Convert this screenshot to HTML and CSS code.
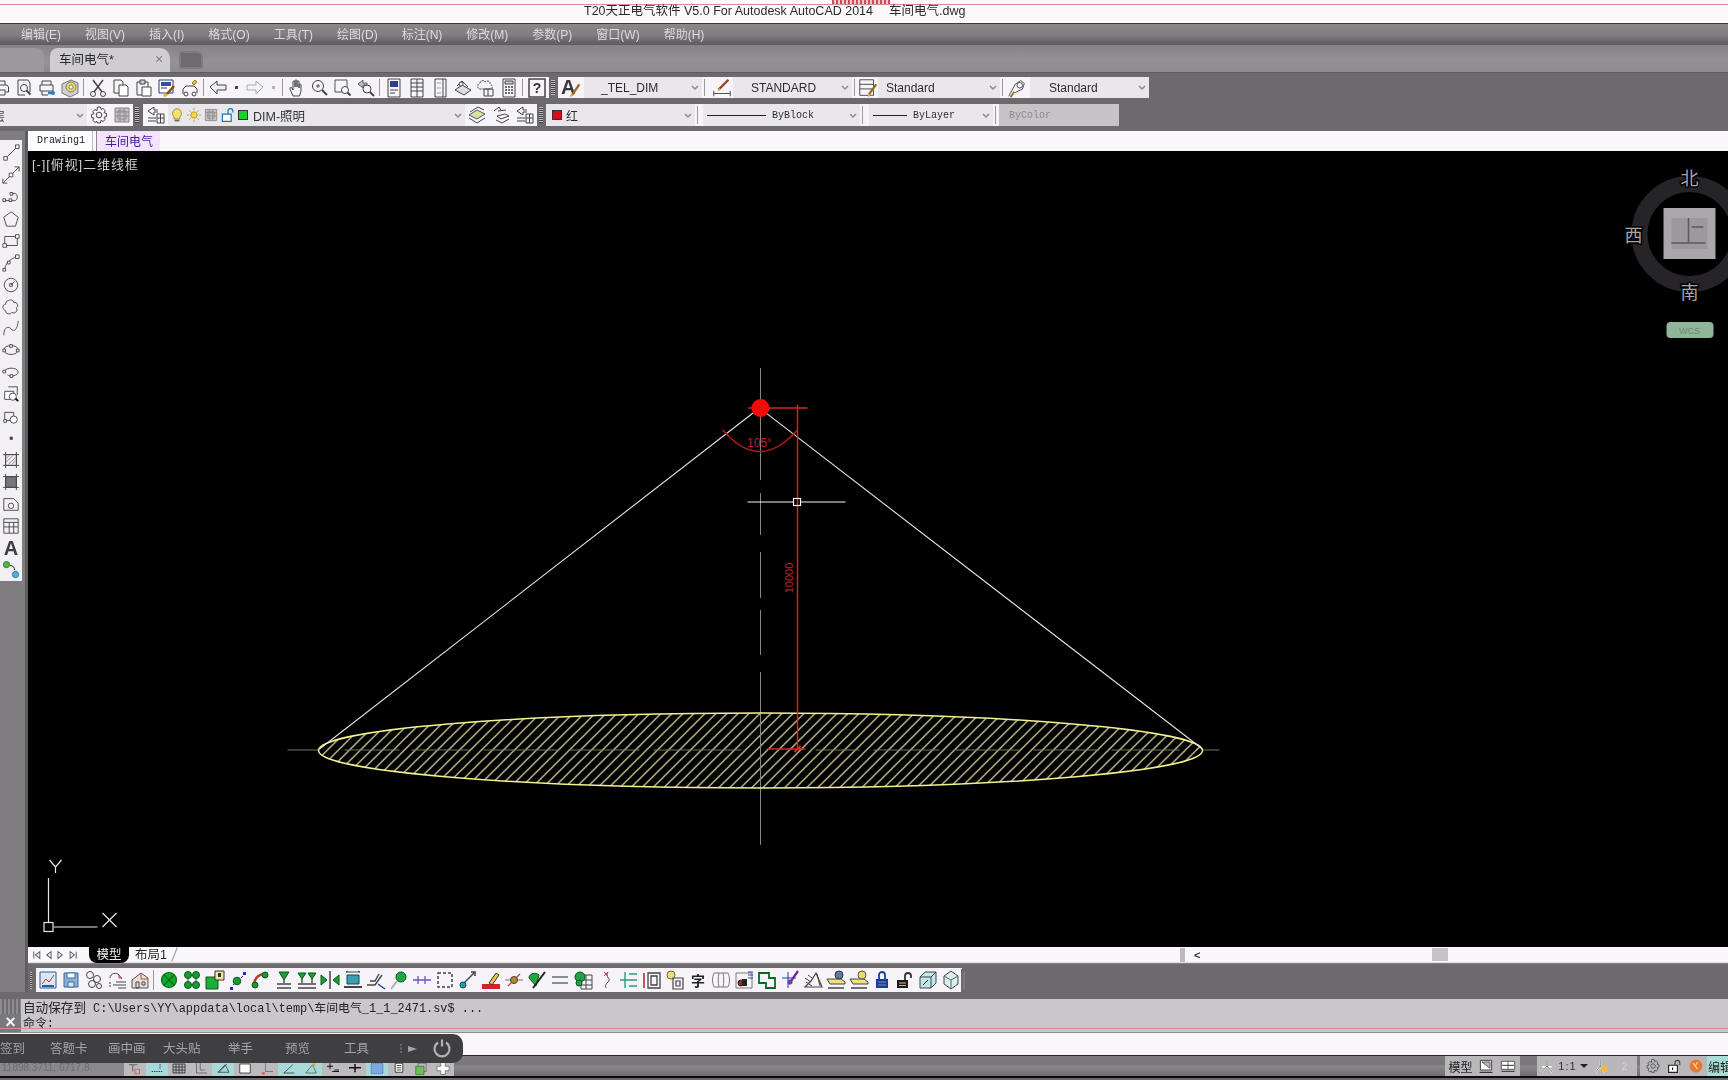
FILE: index.html
```html
<!DOCTYPE html>
<html lang="zh-CN">
<head>
<meta charset="utf-8">
<title>T20天正电气软件 V5.0 For Autodesk AutoCAD 2014</title>
<link rel="stylesheet" href="styles.css">
</head>
<body>
<svg class="defs" aria-hidden="true">
<defs>
<symbol id="printer" viewBox="0 0 20 20"><path d="M6 7V3h8v4M4 7h12l1.500 2v5h-3M5.500 14h-3V9z"/><path d="M6 12h8v5H6z"/></symbol>
<symbol id="preview" viewBox="0 0 20 20"><path d="M4 2h10l2 3v9M4 2v15h7"/><circle cx="10" cy="10" r="3.500"/><path d="M12.500 12.500l4 4" stroke-width="1.800"/></symbol>
<symbol id="plot" viewBox="0 0 20 20"><path d="M5 7V3h9v4M3 7h13v6H3zM5 13v4h6"/><path d="M11 15l6 0" stroke="#2a7fc0" stroke-width="2.500"/><circle cx="16" cy="15" r="2" fill="#2a7fc0" stroke="none"/></symbol>
<symbol id="pub3d" viewBox="0 0 20 20"><path d="M2 6l9-4 7 3v10l-8 4-8-4z" fill="#cfd0d6" stroke="#777"/><circle cx="11" cy="9" r="5" fill="#e4d26a" stroke="#8a8a50"/><circle cx="11" cy="9" r="2" fill="#fff" stroke="#888"/></symbol>
<symbol id="cut" viewBox="0 0 20 20"><path d="M5 2l9 12M15 2L6 14" stroke-width="1.500"/><circle cx="5" cy="16" r="2.500"/><circle cx="15" cy="16" r="2.500"/></symbol>
<symbol id="copy" viewBox="0 0 20 20"><path d="M3 2h7l2 2v3M3 2v13h5"/><path d="M8 7h7l2 2v9H8z" fill="#fff"/></symbol>
<symbol id="paste" viewBox="0 0 20 20"><path d="M3 4h11v5M3 4v13h5" /><path d="M6 2h5v4H6z" fill="#ccc"/><path d="M8 9h9v9H8z" fill="#fff"/></symbol>
<symbol id="match" viewBox="0 0 20 20"><path d="M2 2h14v13H2z" stroke="#2a3a7c" fill="#fff"/><path d="M4 4h10v4H4z" fill="#3a4f9c" stroke="none"/><path d="M4 10h6" stroke="#2a3a7c"/><path d="M17 8l-7 8" stroke="#8a4b10" stroke-width="2.500"/><path d="M8 15l3 2-3 2-2-1z" fill="#e5b020" stroke="none"/></symbol>
<symbol id="block" viewBox="0 0 20 20"><path d="M3 16v-5l3-3h8l3 3v4"/><circle cx="6" cy="16" r="2"/><circle cx="14" cy="16" r="2"/><path d="M12 5l3-3 2 2-3 3z" fill="#ecc030" stroke="#a88010"/></symbol>
<symbol id="undo" viewBox="0 0 20 20"><path d="M2 9l7-6v4h9v5H9v4z" fill="#eee"/></symbol>
<symbol id="redo" viewBox="0 0 20 20"><path d="M18 9l-7-6v4H2v5h9v4z" fill="#f4f4f4" stroke="#aaa"/></symbol>
<symbol id="pan" viewBox="0 0 20 20"><path d="M6 18l-3-7c-.5-2 1-2 2-1l1 2V4c0-1.500 2-1.500 2 0v5-6c0-1.500 2-1.500 2 0v6-5c0-1.500 2-1.500 2 0v6-3c0-1.500 2-1.500 2 0v6l-1.500 5z"/></symbol>
<symbol id="zoom1" viewBox="0 0 20 20"><circle cx="8" cy="8" r="5.500"/><path d="M12 12l5 5" stroke-width="2"/><path d="M6 8h4M8 6v4" stroke-width=".9"/></symbol>
<symbol id="zoom2" viewBox="0 0 20 20"><path d="M2 2h12v12H2z" stroke="#555"/><circle cx="12" cy="12" r="3.500" fill="#fff"/><path d="M14.500 14.500l3 3" stroke-width="2"/></symbol>
<symbol id="zoom3" viewBox="0 0 20 20"><path d="M2 6l5-4v3h4v2H7v3z" fill="#bbb" stroke="#666"/><circle cx="11" cy="11" r="4"/><path d="M14 14l4 4" stroke-width="2"/></symbol>
<symbol id="props" viewBox="0 0 20 20"><path d="M4 1h12v18H4z"/><path d="M6 3h8v6H6z" fill="#2c3f8c" stroke="none"/><path d="M6 12h8M6 15h5"/></symbol>
<symbol id="grid6" viewBox="0 0 20 20"><path d="M4 1h12v18H4zM10 1v18M4 5h12M4 9h12M4 13h12"/></symbol>
<symbol id="palette" viewBox="0 0 20 20"><path d="M5 1h11v18H5zM13 1v18"/><path d="M7 5h4M7 10h4M7 15h4" stroke="#999"/></symbol>
<symbol id="sheets" viewBox="0 0 20 20"><path d="M2 12l7-5 9 5-7 5z" fill="#ddd"/><path d="M4 8l5-5 6 6" /><circle cx="8" cy="6" r="2" fill="#fff"/></symbol>
<symbol id="markup" viewBox="0 0 20 20"><path d="M4 5c0-3 5-3 5-1 2-2 6-1 5 2 3 1 3 5 0 5H4c-3 0-3-5 0-6z" stroke-dasharray="2 1"/><path d="M8 11h9v7H8zM12 11v7"/></symbol>
<symbol id="calc" viewBox="0 0 20 20"><path d="M4 1h12v18H4z"/><path d="M6 3h8v3H6z" fill="#ccc"/><path d="M6 9h2M9 9h2M12 9h2M6 12h2M9 12h2M12 12h2M6 15h2M9 15h2M12 15h2" stroke-width="1.500"/></symbol>
<symbol id="help" viewBox="0 0 20 20"><path d="M2 1h16v18H2z" stroke-width="1.500"/><text x="10" y="15" class="ic-t">?</text></symbol>
<symbol id="styleA" viewBox="0 0 24 24"><text x="1" y="19" class="ic-a">A</text><path d="M13 20l8-12" stroke="#a06a20" stroke-width="2.500"/><path d="M11 21l3-2" stroke="#e2b030" stroke-width="2"/></symbol>
<symbol id="dimst" viewBox="0 0 24 24"><path d="M3 15v6M21 15v6M3 18h18" /><path d="M8 14L19 3" stroke="#a0402a" stroke-width="2.500"/><path d="M7 15l2-3 2 2z" fill="#e2b030" stroke="none"/></symbol>
<symbol id="tablest" viewBox="0 0 24 24"><path d="M3 3h15v17H3zM3 8h15M3 13h15"/><path d="M21 8l-8 11" stroke="#a06a20" stroke-width="2.500"/><path d="M12 19l3 1-3 2z" fill="#e2b030" stroke="none"/></symbol>
<symbol id="mleader" viewBox="0 0 24 24"><path d="M3 21L10 8l6-4 4 3-2 6-8 4" /><circle cx="15" cy="9" r="3"/><path d="M5 22l4-6" stroke="#a06a20" stroke-width="2"/></symbol>
<symbol id="gear" viewBox="0 0 20 20"><circle cx="10" cy="10" r="2.800"/><path d="M8.500 2h3l.5 2.500 2-1 2.300 2.200-1.300 2 2.500.8v3l-2.500.7 1.300 2.100-2.300 2.200-2-1.200-.5 2.700h-3L8 16.300l-2 1.200-2.300-2.200L5 13.200 2.500 12.500v-3L5 8.700l-1.300-2L6 4.500l2 1z"/></symbol>
<symbol id="layfr" viewBox="0 0 20 20"><path d="M3 3h14v14H3z" fill="#c4c2c5" stroke="#888"/><path d="M6 6h8v8H6zM3 7h14M3 11h14M8 3v14M12 3v14" stroke="#8e8c8f"/></symbol>
<symbol id="layer" viewBox="0 0 20 20"><path d="M2 6l6-4v3h4M2 6l6 4V7h4"/><path d="M2 13h8M2 16h8"/><path d="M11 9h7v9h-7zM11 13h7M14.500 9v9"/></symbol>
<symbol id="bulb" viewBox="0 0 20 20"><path d="M10 2a6 6 0 0 1 3.500 10.500V15h-7v-2.500A6 6 0 0 1 10 2z" fill="#f4e36e" stroke="#8a7a30"/><path d="M7 17h6" stroke="#666" stroke-width="2"/></symbol>
<symbol id="sun" viewBox="0 0 20 20"><circle cx="10" cy="10" r="4" fill="#f2d84a" stroke="#a88a20"/><path d="M10 1v3M10 16v3M1 10h3M16 10h3M4 4l2 2M14 14l2 2M16 4l-2 2M6 14l-2 2" stroke="#b09020"/></symbol>
<symbol id="unlock" viewBox="0 0 20 20"><path d="M3 9h11v9H3z" fill="#fff" stroke="#1878b8" stroke-width="1.500"/><path d="M10 9V5a3 3 0 0 1 6 0v2" stroke="#1878b8" stroke-width="1.500"/></symbol>
<symbol id="laytop" viewBox="0 0 20 20"><path d="M2 10l8-5 8 4-8 5z" fill="#d8e2a0" stroke="#556"/><path d="M2 13l8 5 8-5M3 7l8-5 6 3" stroke="#446"/></symbol>
<symbol id="layprev" viewBox="0 0 20 20"><path d="M3 6l5-4 2 3M6 11l8-2 4 2-8 3z"/><path d="M5 15l6 3 7-4M7 6l8-1"/></symbol>

<symbol id="l-line" viewBox="0 0 20 20"><path d="M4 16L17 3"/><path d="M2 14h4v4H2zM15 1h4v4h-4z" fill="#fff"/></symbol>
<symbol id="l-xline" viewBox="0 0 20 20"><path d="M1 19L19 1" /><path d="M1 14v5h5M14 1h5v5" /><path d="M8 8h4v4H8z" fill="#fff"/></symbol>
<symbol id="l-pline" viewBox="0 0 20 20"><path d="M3 14h11c4 0 4-8 0-8h-3"/><path d="M1 12h3v3H1zM8 12h3v3H8zM9 5h3v3H9z" fill="#fff"/></symbol>
<symbol id="l-polygon" viewBox="0 0 20 20"><path d="M10 2l8 6-3 10H5L2 8z"/></symbol>
<symbol id="l-rect" viewBox="0 0 20 20"><path d="M3 5h14v10H3z"/><path d="M1 13h4v4H1zM15 3h4v4h-4z" fill="#fff"/></symbol>
<symbol id="l-arc" viewBox="0 0 20 20"><path d="M3 18C3 11 9 5 17 3"/><path d="M1 16h3v3H1zM6 8h3v3H6zM15 1h4v4h-4z" fill="#fff"/></symbol>
<symbol id="l-circle" viewBox="0 0 20 20"><circle cx="10" cy="10" r="7.500"/><path d="M10 10l4-4M8.500 8.500h3v3h-3z"/></symbol>
<symbol id="l-cloud" viewBox="0 0 20 20"><path d="M7 3c3-2 6 0 6 2 4-1 6 4 3 6 2 3-1 7-5 5-2 3-7 2-7-2-4-1-4-7 0-7 0-2 1-4 3-4z"/></symbol>
<symbol id="l-spline" viewBox="0 0 20 20"><path d="M2 18C2 8 8 8 10 11s7 3 8-9"/></symbol>
<symbol id="l-ellipse" viewBox="0 0 20 20"><ellipse cx="10" cy="10" rx="8" ry="5"/><path d="M1 9h3v3H1zM8.500 4h3v3h-3zM16 9h3v3h-3z" fill="#fff"/></symbol>
<symbol id="l-earc" viewBox="0 0 20 20"><path d="M3 9c1-4 14-5 15 1 0 4-9 6-12 3"/><path d="M1 8h3v3H1zM9 13h3v3H9z" fill="#fff"/></symbol>
<symbol id="l-insert" viewBox="0 0 20 20"><path d="M7 2h10v9"/><path d="M3 7h10v9H3z" fill="#fff"/><circle cx="12" cy="13" r="4" fill="#fff"/><path d="M15 15l3 3" stroke="#111" stroke-width="2"/></symbol>
<symbol id="l-block" viewBox="0 0 20 20"><path d="M3 6h10v9H3z"/><circle cx="13" cy="14" r="4" fill="#fff"/><path d="M2 14h3v3H2z" fill="#fff"/></symbol>
<symbol id="l-point" viewBox="0 0 20 20"><path d="M9 9h2.500v2.500H9z" fill="#444"/></symbol>
<symbol id="l-hatch" viewBox="0 0 20 20"><path d="M4 4h12v12H4zM1 4h18M1 16h18M4 1v18M16 1v18"/><path d="M5 12l7-7M7 15l8-8M5 8l3-3M11 15l4-4" stroke="#777"/></symbol>
<symbol id="l-grad" viewBox="0 0 20 20"><path d="M4 4h12v12H4z" fill="#777"/><path d="M1 4h18M1 16h18M4 1v18M16 1v18"/></symbol>
<symbol id="l-region" viewBox="0 0 20 20"><path d="M2 4h11l5 5v8H2z"/><circle cx="10" cy="12" r="3"/></symbol>
<symbol id="l-table" viewBox="0 0 20 20"><path d="M2 2h16v16H2zM2 6h16M2 11h16M8 6v12M13 6v12"/></symbol>
<symbol id="l-add" viewBox="0 0 20 20"><circle cx="5" cy="4" r="3.500" fill="#58b048" stroke="#2e7a2a"/><circle cx="15" cy="15" r="3.500" fill="#50b0d8" stroke="#2a7aa0"/><path d="M9 5c3 0 5 2 5 5" stroke="#111"/></symbol>

<symbol id="b-chart" viewBox="0 0 20 20"><path d="M2 2h16v16H2z" fill="#dce6f2" stroke="#2f5f9a"/><path d="M4 14l4-5 3 3 5-7" stroke="#c04040"/><path d="M4 16h12" stroke="#2f5f9a" stroke-width="2"/></symbol>
<symbol id="b-save" viewBox="0 0 20 20"><path d="M3 3h14v14H3z" fill="#8aaed6" stroke="#3a6a9c"/><path d="M6 3h8v5H6z" fill="#fff" stroke="#3a6a9c"/><path d="M7 12h6v5H7z" fill="#dfe6ee" stroke="#3a6a9c"/></symbol>
<symbol id="b-links" viewBox="0 0 20 20"><circle cx="6" cy="5" r="3.500"/><circle cx="13" cy="9" r="3.500"/><circle cx="8" cy="14" r="3.500"/><circle cx="15" cy="16" r="2.500"/></symbol>
<symbol id="b-query" viewBox="0 0 20 20"><path d="M3 8c0-5 7-6 9-3l3 4M6 15h13M9 12h10M11 18h8" /><path d="M3 12v5" stroke-dasharray="2 1" stroke="#333"/><path d="M12 5v3h3" stroke="#b04040"/></symbol>
<symbol id="b-house" viewBox="0 0 20 20"><path d="M2 10l9-7 7 5v10H2z" fill="#e7e0da" stroke="#555"/><path d="M11 3v6h7" stroke="#c04a40"/><path d="M6 12h3v6H6zM12 12h3v3h-3z"/></symbol>
<symbol id="g-lamp" viewBox="0 0 20 20"><circle cx="10" cy="10" r="7.500" fill="#12a82e" stroke="#0a6a1c" stroke-width="1.200"/><path d="M5 5l10 10M15 5L5 15" stroke="#0a6a1c" stroke-width="1.200"/></symbol>
<symbol id="g-four" viewBox="0 0 20 20"><g fill="#14a02c" stroke="#07551a"><circle cx="6" cy="5" r="3.500"/><circle cx="14" cy="5" r="3.500"/><circle cx="6" cy="15" r="3.500"/><circle cx="14" cy="15" r="3.500"/></g><path d="M6 8v4M14 8v4"/></symbol>
<symbol id="g-box" viewBox="0 0 20 20"><path d="M1 7h12v12H1z" fill="#1cae36" stroke="#0a5a1c"/><path d="M10 1h9v9h-9z" fill="#f0e4a0" stroke="#333"/><path d="M13 3h3v4h-3z" fill="#333" stroke="none"/></symbol>
<symbol id="g-row" viewBox="0 0 20 20"><circle cx="9" cy="11" r="3.800" fill="#12a02c" stroke="#0a5a1c"/><path d="M2 17h3v3H2zM15 2h3v3h-3z" fill="#1a2ac0" stroke="none"/><path d="M5 15l1-1M13 8l2-2" stroke="#1a2ac0"/></symbol>
<symbol id="g-curve" viewBox="0 0 20 20"><path d="M3 16C3 7 9 3 17 4" stroke="#c0382c" stroke-width="2.500"/><circle cx="4" cy="15" r="3" fill="#169a2c" stroke="#0a5a1c"/><circle cx="14" cy="5" r="3" fill="#169a2c" stroke="#0a5a1c"/></symbol>
<symbol id="g-cup1" viewBox="0 0 20 20"><path d="M5 2h10l-5 8z" fill="#17a235" stroke="#0a5a1c"/><path d="M10 10v3M3 14h14M3 18h14" stroke-width="1.400"/></symbol>
<symbol id="g-cup2" viewBox="0 0 20 20"><path d="M1 3h8L5 9zM11 3h8l-4 6z" fill="#17a235" stroke="#0a5a1c"/><path d="M5 9v4M15 9v4M1 14h18M1 18h18" stroke-width="1.400"/></symbol>
<symbol id="g-mirror" viewBox="0 0 20 20"><path d="M10 1v18" stroke-width="1.500"/><path d="M1 5l6 5-6 5z" fill="#16a02c" stroke="#0a5a1c"/><path d="M19 5l-6 5 6 5z" fill="#16a02c" stroke="#0a5a1c"/></symbol>
<symbol id="g-arrows" viewBox="0 0 20 20"><path d="M3 2h14M3 2l2-1M17 2l-2-1"/><path d="M4 5h12v9H4z" fill="#3aa0b0" stroke="#0a4a5a"/><path d="M1 17h18" stroke-width="2"/></symbol>
<symbol id="g-bend" viewBox="0 0 20 20"><path d="M1 15h8l7-10M4 11h5l4-7" stroke-width="1.400"/><path d="M12 14l7 5" stroke="#2244a0" stroke-width="1.500"/></symbol>
<symbol id="g-pin" viewBox="0 0 20 20"><circle cx="12" cy="7" r="5" fill="#20a840" stroke="#0a5a1c"/><path d="M8 11l-6 8" stroke="#aaa" stroke-width="1.800"/></symbol>
<symbol id="g-dim" viewBox="0 0 20 20"><path d="M1 10h18M6 6v8M13 6v8" stroke="#7050c8" stroke-width="1.300"/></symbol>
<symbol id="g-dash" viewBox="0 0 20 20"><path d="M3 3h14v14H3z" stroke-dasharray="3 2" stroke-width="1.500"/></symbol>
<symbol id="g-arrowpin" viewBox="0 0 20 20"><path d="M6 13L17 2" stroke-width="1.500"/><path d="M13 2h4v4" stroke-width="1.500"/><circle cx="5" cy="15" r="3" fill="#2a9aa8" stroke="#0a4a5a"/></symbol>
<symbol id="g-pen" viewBox="0 0 20 20"><path d="M1 14h18v5H1z" fill="#d8202c" stroke="none"/><path d="M8 13l7-10 3 2-7 10z" fill="#f0c040" stroke="#333"/></symbol>
<symbol id="g-cross" viewBox="0 0 20 20"><path d="M1 10h18" stroke="#777"/><path d="M4 16L16 4" stroke="#d04030" stroke-width="1.200"/><circle cx="10" cy="10" r="3.500" fill="#b08a30" stroke="#444"/></symbol>
<symbol id="g-heart" viewBox="0 0 20 20"><path d="M2 8c0-5 7-6 10-3l-3 11z" fill="#20a840" stroke="#0a5a1c"/><path d="M18 2L6 18" stroke="#222" stroke-width="2"/></symbol>
<symbol id="g-eq" viewBox="0 0 20 20"><path d="M2 7h16M2 13h16" stroke="#8a8d92" stroke-width="2"/></symbol>
<symbol id="g-tree" viewBox="0 0 20 20"><path d="M8 5h11v14H8zM8 10h11M8 15h11M13 5v14"/><circle cx="7" cy="7" r="5" fill="#20a048" stroke="#0a5a1c"/><circle cx="6" cy="13" r="3" fill="#20a048" stroke="#0a5a1c"/></symbol>
<symbol id="g-wire" viewBox="0 0 20 20"><path d="M12 2c-4 5 4 6 0 10s-2 5-2 6"/><path d="M8 2l4 4M12 2L8 6" stroke="#c83a3a"/></symbol>
<symbol id="g-bus" viewBox="0 0 20 20"><path d="M1 10h10M6 2v16" stroke="#2a9a80" stroke-width="1.400"/><path d="M10 4h8M11 10h7M10 16h8" stroke="#2a9a80" stroke-width="1.400"/></symbol>
<symbol id="g-cab" viewBox="0 0 20 20"><path d="M2 3v15" stroke="#b82020" stroke-width="1.500"/><path d="M6 3h12v15H6zM9 6h6v9H9z" stroke-width="1.300"/></symbol>
<symbol id="g-lampcab" viewBox="0 0 20 20"><circle cx="6" cy="5" r="4" fill="#f0e070" stroke="#666"/><path d="M8 8h10v11H8zM11 11h4v5h-4z" stroke-width="1.200"/></symbol>
<symbol id="g-char" viewBox="0 0 20 20"><text x="10" y="16" class="ic-z">字</text></symbol>
<symbol id="g-book" viewBox="0 0 20 20"><path d="M3 3c-2 4-2 10 0 14h14c2-4 2-10 0-14zM8 3c-1 4-1 10 0 14M12 3c1 4 1 10 0 14" stroke="#777"/></symbol>
<symbol id="g-doc" viewBox="0 0 20 20"><path d="M2 3h16v15H2z" stroke="#777"/><circle cx="7" cy="13" r="3" fill="#a82020" stroke="#222"/><path d="M8 9h5v7H8z" fill="#222" stroke="none"/><path d="M14 2h5M14 5h5M14 8h5" stroke="#2244a0"/></symbol>
<symbol id="g-shape" viewBox="0 0 20 20"><path d="M2 3h10v5h6v10H9v-5H2z" stroke="#086a20" stroke-width="1.800"/></symbol>
<symbol id="g-wand" viewBox="0 0 20 20"><path d="M2 8h14M8 2v16" stroke="#2438b0"/><path d="M18 1l-9 13" stroke="#6a2a98" stroke-width="2.200"/><circle cx="10" cy="12" r="2.500" fill="#7b3ab0" stroke="none"/></symbol>
<symbol id="g-stack" viewBox="0 0 20 20"><path d="M2 17h17L13 3 8 11z" stroke-width="1.200"/><path d="M2 8l6 4M3 12l6 4M14 4l3 12M5 5l4 3" stroke="#444"/></symbol>
<symbol id="g-drawer" viewBox="0 0 20 20"><path d="M1 9h14l4 3v2H4z" fill="#f0e07a"/><path d="M2 18h16" stroke-width="1.500"/><circle cx="13" cy="5" r="4" fill="#5a7aa8" stroke="#333"/></symbol>
<symbol id="g-drawer2" viewBox="0 0 20 20"><path d="M1 9h14l4 3v2H4z" fill="#f0e07a"/><path d="M2 18h16" stroke-width="1.500"/><circle cx="13" cy="5" r="4" fill="#ecdc70" stroke="#555"/></symbol>
<symbol id="g-lock" viewBox="0 0 20 20"><path d="M4 9h12v9H4z" fill="#14409c" stroke="none"/><path d="M7 9V5a3 3 0 0 1 6 0v4" stroke="#14409c" stroke-width="1.800"/><path d="M6 12h8M6 15h8" stroke="#88a"/></symbol>
<symbol id="g-unlock" viewBox="0 0 20 20"><path d="M2 10h11v8H2z" fill="#1a1a1a" stroke="none"/><path d="M10 10V6a3 3 0 0 1 6 0v2" stroke="#333" stroke-width="1.800"/><path d="M4 13h7M4 15.500h7" stroke="#d8c048"/></symbol>
<symbol id="g-cube" viewBox="0 0 20 20"><path d="M2 7l5-5h11v11l-5 5H2z" fill="#bfe6ea"/><path d="M2 7h11v11M13 7l5-5" /><path d="M5 15l5-5" stroke="#222"/></symbol>
<symbol id="g-gem" viewBox="0 0 20 20"><path d="M10 1l7 5v8l-7 5-7-5V6z" fill="#d9eee8"/><path d="M10 10v9M10 10L3 6M10 10l7-4" stroke="#567"/></symbol>

<symbol id="s-snap" viewBox="0 0 20 20"><path d="M2 5h11M7 5v9" /><path d="M10 11h6v6h-6z" stroke="#c05040"/></symbol>
<symbol id="s-dots" viewBox="0 0 20 20"><path d="M3 14h14M14 4v7" stroke-dasharray="2 1" stroke="#113"/></symbol>
<symbol id="s-grid" viewBox="0 0 20 20"><path d="M2 4h16v12H2zM2 8h16M2 12h16M6 4v12M10 4v12M14 4v12" stroke="#222"/></symbol>
<symbol id="s-ortho" viewBox="0 0 20 20"><path d="M4 3v13h14M9 3v9h6" stroke="#555"/></symbol>
<symbol id="s-polar" viewBox="0 0 20 20"><path d="M3 15h15L13 5z" stroke="#333"/><path d="M5 15L15 4" /></symbol>
<symbol id="s-osnap" viewBox="0 0 20 20"><path d="M3 4h14v12H3z" fill="#fff" stroke="#222"/></symbol>
<symbol id="s-track" viewBox="0 0 20 20"><path d="M8 3v11h10" stroke="#666"/><path d="M3 15h4v3H3z" fill="#e05a3a" stroke="none"/></symbol>
<symbol id="s-ducs" viewBox="0 0 20 20"><path d="M3 16h14M3 16L15 5" stroke="#333"/></symbol>
<symbol id="s-dyn" viewBox="0 0 20 20"><path d="M3 16L12 5l5 11z" stroke="#555"/><circle cx="14" cy="5" r="2" fill="#e0a030" stroke="none"/></symbol>
<symbol id="s-lwt" viewBox="0 0 20 20"><path d="M2 7h8M6 3v8M12 12h6M9 14h9" stroke="#111" stroke-width="1.300"/></symbol>
<symbol id="s-plus" viewBox="0 0 20 20"><path d="M2 9h16M10 4v11" stroke="#111" stroke-width="2"/></symbol>
<symbol id="s-qp" viewBox="0 0 20 20"><path d="M2 3h16v14H2z" fill="#7ea8e0" stroke="#2f63b0" stroke-dasharray="1.500 1"/></symbol>
<symbol id="s-list" viewBox="0 0 20 20"><path d="M5 3h10v12H5z" fill="#fff" stroke="#111"/><path d="M7 6h6M7 9h6M7 12h6" stroke="#111"/></symbol>
<symbol id="s-green" viewBox="0 0 20 20"><path d="M6 3h11v11H6z" stroke="#666"/><path d="M3 7h11v11H3z" fill="#6fc050" stroke="#2e7a2a"/></symbol>
<symbol id="s-cross" viewBox="0 0 20 20"><path d="M7 2h6v5h5v6h-5v5H7v-5H2V7h5z" fill="#fff" stroke="#666"/></symbol>
<symbol id="r-layout" viewBox="0 0 20 20"><path d="M3 3h14v12H3z" fill="#fff" stroke="#222"/><path d="M5 5h10v8z" fill="#bbb"/><path d="M2 18h16" stroke="#333" stroke-width="1.500"/></symbol>
<symbol id="r-two" viewBox="0 0 24 20"><path d="M2 3h20v12H2zM12 3v12" fill="#fff" stroke="#222"/><path d="M3 9h18" stroke="#333" stroke-width="1.500"/><path d="M2 18h20" stroke="#333" stroke-width="1.500"/></symbol>
<symbol id="r-anno" viewBox="0 0 20 20"><path d="M10 2v8M10 10l-7 8M10 10l7 8M4 11h12" stroke="#fff" stroke-width="2"/><path d="M10 2v8M10 10l-7 8M10 10l7 8" stroke="#333" stroke-width=".9"/></symbol>
<symbol id="r-annoy" viewBox="0 0 20 20"><path d="M9 2v8M9 10l-6 8M9 10l6 8" stroke="#fff" stroke-width="2.200"/><path d="M9 2v8M9 10l-6 8M9 10l6 8" stroke="#333" stroke-width=".8"/><circle cx="14" cy="13" r="4" fill="#f0c030" stroke="none"/></symbol>
<symbol id="r-lock" viewBox="0 0 20 20"><path d="M2 9h11v9H2z" fill="#fff" stroke="#222" stroke-width="1.400"/><path d="M10 9V6a3 3 0 0 1 6 0v3" stroke="#444" stroke-width="1.400"/><path d="M7 12v3" stroke="#222" stroke-width="1.500"/></symbol>
<symbol id="r-orange" viewBox="0 0 20 20"><circle cx="10" cy="10" r="8" fill="#e57a2e" stroke="none"/><path d="M6 6l6 8M12 5l-3 5" stroke="#f6d0b0" stroke-width="1.500"/></symbol>
</defs>
</svg>

<div class="app">
  <header class="titlebar">
    <div class="title-top"><span class="title-mark"></span></div>
    <div class="title-text soft">T20天正电气软件 V5.0 For Autodesk AutoCAD 2014<span class="title-file">车间电气.dwg</span></div>
  </header>

  <nav class="menubar">
    <span>编辑(E)</span><span>视图(V)</span><span>插入(I)</span><span>格式(O)</span><span>工具(T)</span><span>绘图(D)</span><span>标注(N)</span><span>修改(M)</span><span>参数(P)</span><span>窗口(W)</span><span>帮助(H)</span>
  </nav>

  <div class="filetabs soft">
    <div class="filetab-stub"></div>
    <div class="filetab"><span class="filetab-name">车间电气*</span><span class="filetab-x">×</span></div>
    <div class="filetab-new"></div>
  </div>

  <div class="toolbars soft">
    <div class="tbrow">
      <div class="strip strip-std">
        <span class="cell"><svg class="ic"><use href="#printer"/></svg></span>
        <span class="cell"><svg class="ic"><use href="#preview"/></svg></span>
        <span class="cell"><svg class="ic"><use href="#plot"/></svg></span>
        <span class="cell"><svg class="ic"><use href="#pub3d"/></svg></span>
        <i class="sep"></i>
        <span class="cell"><svg class="ic"><use href="#cut"/></svg></span>
        <span class="cell"><svg class="ic"><use href="#copy"/></svg></span>
        <span class="cell"><svg class="ic"><use href="#paste"/></svg></span>
        <span class="cell"><svg class="ic"><use href="#match"/></svg></span>
        <span class="cell"><svg class="ic"><use href="#block"/></svg></span>
        <i class="sep"></i>
        <span class="cell"><svg class="ic"><use href="#undo"/></svg></span>
        <span class="cell cell-dot"><i class="dot"></i></span>
        <span class="cell"><svg class="ic"><use href="#redo"/></svg></span>
        <span class="cell cell-dot"><i class="dot dot-dim"></i></span>
        <i class="sep"></i>
        <span class="cell"><svg class="ic"><use href="#pan"/></svg></span>
        <span class="cell"><svg class="ic"><use href="#zoom1"/></svg></span>
        <span class="cell"><svg class="ic"><use href="#zoom2"/></svg></span>
        <span class="cell"><svg class="ic"><use href="#zoom3"/></svg></span>
        <i class="sep"></i>
        <span class="cell"><svg class="ic"><use href="#props"/></svg></span>
        <span class="cell"><svg class="ic"><use href="#grid6"/></svg></span>
        <span class="cell"><svg class="ic"><use href="#palette"/></svg></span>
        <span class="cell"><svg class="ic"><use href="#sheets"/></svg></span>
        <span class="cell"><svg class="ic"><use href="#markup"/></svg></span>
        <span class="cell"><svg class="ic"><use href="#calc"/></svg></span>
        <i class="sep"></i>
        <span class="cell"><svg class="ic"><use href="#help"/></svg></span>
      </div>
      <i class="grip grip-std"></i>
      <div class="strip strip-styles">
        <span class="cell w26"><svg class="ic ic-lg"><use href="#styleA"/></svg></span>
        <div class="combo w118 pl17"><span>_TEL_DIM</span><svg class="chev"><polyline points="1,2 4,5 7,2"/></svg></div>
        <i class="sep w8"></i>
        <span class="cell w23"><svg class="ic ic-lg"><use href="#dimst"/></svg></span>
        <div class="combo w119 pl18"><span>STANDARD</span><svg class="chev"><polyline points="1,2 4,5 7,2"/></svg></div>
        <i class="sep"></i>
        <span class="cell w21"><svg class="ic ic-lg"><use href="#tablest"/></svg></span>
        <div class="combo w122 pl8"><span>Standard</span><svg class="chev"><polyline points="1,2 4,5 7,2"/></svg></div>
        <i class="sep w3"></i>
        <span class="cell w27"><svg class="ic ic-lg"><use href="#mleader"/></svg></span>
        <div class="combo w119 pl19"><span>Standard</span><svg class="chev"><polyline points="1,2 4,5 7,2"/></svg></div>
      </div>
    </div>

    <div class="tbrow tbrow-2">
      <div class="strip strip-workspace">
        <div class="combo w87"><span class="clip-char">层</span><svg class="chev"><polyline points="1,2 4,5 7,2"/></svg></div>
        <span class="cell"><svg class="ic"><use href="#gear"/></svg></span>
        <span class="cell"><svg class="ic"><use href="#layfr"/></svg></span>
      </div>
      <i class="grip grip-10"></i>
      <div class="strip strip-layer">
        <span class="cell w25"><svg class="ic"><use href="#layer"/></svg></span>
        <div class="combo combo-layer">
          <svg class="ic ic-s"><use href="#bulb"/></svg>
          <svg class="ic ic-s"><use href="#sun"/></svg>
          <svg class="ic ic-s"><use href="#layfr"/></svg>
          <svg class="ic ic-s"><use href="#unlock"/></svg>
          <i class="swatch swatch-green"></i>
          <span class="layer-name">DIM-照明</span>
          <svg class="chev"><polyline points="1,2 4,5 7,2"/></svg>
        </div>
        <span class="cell w24"><svg class="ic"><use href="#laytop"/></svg></span>
        <span class="cell w24"><svg class="ic"><use href="#layprev"/></svg></span>
        <span class="cell w24"><svg class="ic"><use href="#layer"/></svg></span>
      </div>
      <i class="grip grip-9"></i>
      <div class="strip strip-props">
        <div class="combo w149"><i class="swatch swatch-red"></i><span class="color-name">红</span><svg class="chev"><polyline points="1,2 4,5 7,2"/></svg></div>
        <i class="sep w8"></i>
        <div class="combo w157 combo-line"><i class="ln ln-59"></i><span class="mono">ByBlock</span><svg class="chev"><polyline points="1,2 4,5 7,2"/></svg></div>
        <i class="sep w9"></i>
        <div class="combo w124 combo-line"><i class="ln ln-34"></i><span class="mono mono-gap">ByLayer</span><svg class="chev"><polyline points="1,2 4,5 7,2"/></svg></div>
        <i class="sep w6"></i>
        <div class="combo w120 combo-off"><span class="mono">ByColor</span></div>
      </div>
    </div>
  </div>

  <div class="work">
    <aside class="leftcol">
      <div class="drawtools soft">
        <svg class="ic"><use href="#l-line"/></svg>
        <svg class="ic"><use href="#l-xline"/></svg>
        <svg class="ic"><use href="#l-pline"/></svg>
        <svg class="ic"><use href="#l-polygon"/></svg>
        <svg class="ic"><use href="#l-rect"/></svg>
        <svg class="ic"><use href="#l-arc"/></svg>
        <svg class="ic"><use href="#l-circle"/></svg>
        <svg class="ic"><use href="#l-cloud"/></svg>
        <svg class="ic"><use href="#l-spline"/></svg>
        <svg class="ic"><use href="#l-ellipse"/></svg>
        <svg class="ic"><use href="#l-earc"/></svg>
        <svg class="ic"><use href="#l-insert"/></svg>
        <svg class="ic"><use href="#l-block"/></svg>
        <svg class="ic"><use href="#l-point"/></svg>
        <svg class="ic"><use href="#l-hatch"/></svg>
        <svg class="ic"><use href="#l-grad"/></svg>
        <svg class="ic"><use href="#l-region"/></svg>
        <svg class="ic"><use href="#l-table"/></svg>
        <span class="tool-a">A</span>
        <svg class="ic"><use href="#l-add"/></svg>
      </div>
    </aside>

    <div class="rightcol">
      <div class="doctabs soft">
        <span class="doctab">Drawing1</span>
        <span class="doctab doctab-on">车间电气</span>
      </div>

      <div class="canvas">
        <div class="view-label soft">[-][俯视]二维线框</div>
        <svg class="drawing" viewBox="29 151 1699 796">
          <defs>
            <pattern id="hatch" patternUnits="userSpaceOnUse" width="11" height="11">
              <path class="hatch-line" d="M-1 12L12 -1M-1 1L1 -1M10 12L12 10"/>
            </pattern>
          </defs>
          <ellipse class="hatch-fill" cx="761" cy="750.500" rx="442" ry="37.500"/>
          <path class="center" d="M761 368V480M761 493V535M761 552V598M761 610V655M761 672V845"/>
          <path class="center center-h" d="M288 750H320M345 750H400M412 750H470M484 750H560M570 750H640M654 750H742M816 750H860M874 750H940M954 750H1020M1034 750H1100M1112 750H1180M1203 750H1220"/>
          <ellipse class="ellipse" cx="761" cy="750.500" rx="442" ry="37.500"/>
          <path class="beam" d="M760 408L320 749M760 408L1203 749"/>
          <path class="dim" d="M798 405V750M749 408H808M768 749H806"/>
          <path class="dim-x" d="M795 752L801 746"/>
          <circle class="lamp" cx="761" cy="408" r="9"/>
          <path class="arc" d="M726 433Q760 470 795 433"/>
          <path class="arc-tick" d="M723 430L729 436M792 436L798 430"/>
          <text class="dim-text" x="760" y="447">105°</text>
          <text class="dim-text dim-len" transform="translate(793 578) rotate(-90)">10000</text>
          <path class="cursor" d="M748 502H794M801 502H846"/>
          <rect class="cursor" x="794" y="498.500" width="7" height="7"/>
          <path class="ucs" d="M49 878V922M54 927H98M103 913L117 927M117 913L103 927M50 860L56 867L62 860M56 867V873"/>
          <rect class="ucs" x="44.500" y="922.500" width="9" height="9"/>
          <circle class="vc-ring" cx="1690" cy="234" r="50"/>
          <text class="vc-dir" x="1690" y="185">北</text>
          <text class="vc-dir" x="1690" y="299">南</text>
          <text class="vc-dir" x="1634" y="242">西</text>
          <rect class="vc-cube" x="1664" y="208" width="52" height="51"/>
          <rect class="vc-face" x="1672" y="218" width="36" height="31"/>
          <path class="vc-glyph" d="M1689 218V243M1672 243H1706M1692 227H1704"/>
          <rect class="vc-wcs" x="1667" y="322" width="47" height="16" rx="4"/>
          <text class="vc-wcs-t" x="1690" y="334">WCS</text>
        </svg>
      </div>

      <div class="layouttabs soft">
        <div class="nav-arrows">
          <svg class="navs" viewBox="0 0 60 12"><path d="M2 2v8M9 2L4 6l5 4zM22 2l-5 4 5 4zM30 2l5 4-5 4zM44 2l5 4-5 4zM51 2v8"/></svg>
        </div>
        <span class="layout-on">模型</span>
        <span class="layout-off">布局1</span>
        <i class="layout-slash"></i>
        <i class="hs-grip"></i>
        <span class="hs-left">&lt;</span>
        <i class="hs-thumb"></i>
      </div>

      <div class="drawbar soft">
        <i class="grip grip-draw"></i>
        <div class="strip strip-draw">
          <span class="cell"><svg class="ic"><use href="#b-chart"/></svg></span>
          <span class="cell"><svg class="ic"><use href="#b-save"/></svg></span>
          <span class="cell"><svg class="ic"><use href="#b-links"/></svg></span>
          <span class="cell"><svg class="ic"><use href="#b-query"/></svg></span>
          <span class="cell"><svg class="ic"><use href="#b-house"/></svg></span>
          <i class="sep sep-6"></i>
          <span class="cell"><svg class="ic"><use href="#g-lamp"/></svg></span>
          <span class="cell"><svg class="ic"><use href="#g-four"/></svg></span>
          <span class="cell"><svg class="ic"><use href="#g-box"/></svg></span>
          <span class="cell"><svg class="ic"><use href="#g-row"/></svg></span>
          <span class="cell"><svg class="ic"><use href="#g-curve"/></svg></span>
          <span class="cell"><svg class="ic"><use href="#g-cup1"/></svg></span>
          <span class="cell"><svg class="ic"><use href="#g-cup2"/></svg></span>
          <span class="cell"><svg class="ic"><use href="#g-mirror"/></svg></span>
          <span class="cell"><svg class="ic"><use href="#g-arrows"/></svg></span>
          <span class="cell"><svg class="ic"><use href="#g-bend"/></svg></span>
          <span class="cell"><svg class="ic"><use href="#g-pin"/></svg></span>
          <span class="cell"><svg class="ic"><use href="#g-dim"/></svg></span>
          <span class="cell"><svg class="ic"><use href="#g-dash"/></svg></span>
          <span class="cell"><svg class="ic"><use href="#g-arrowpin"/></svg></span>
          <span class="cell"><svg class="ic"><use href="#g-pen"/></svg></span>
          <span class="cell"><svg class="ic"><use href="#g-cross"/></svg></span>
          <span class="cell"><svg class="ic"><use href="#g-heart"/></svg></span>
          <span class="cell"><svg class="ic"><use href="#g-eq"/></svg></span>
          <span class="cell"><svg class="ic"><use href="#g-tree"/></svg></span>
          <span class="cell"><svg class="ic"><use href="#g-wire"/></svg></span>
          <span class="cell"><svg class="ic"><use href="#g-bus"/></svg></span>
          <span class="cell"><svg class="ic"><use href="#g-cab"/></svg></span>
          <span class="cell"><svg class="ic"><use href="#g-lampcab"/></svg></span>
          <span class="cell"><svg class="ic"><use href="#g-char"/></svg></span>
          <span class="cell"><svg class="ic"><use href="#g-book"/></svg></span>
          <span class="cell"><svg class="ic"><use href="#g-doc"/></svg></span>
          <span class="cell"><svg class="ic"><use href="#g-shape"/></svg></span>
          <span class="cell"><svg class="ic"><use href="#g-wand"/></svg></span>
          <span class="cell"><svg class="ic"><use href="#g-stack"/></svg></span>
          <span class="cell"><svg class="ic"><use href="#g-drawer"/></svg></span>
          <span class="cell"><svg class="ic"><use href="#g-drawer2"/></svg></span>
          <span class="cell"><svg class="ic"><use href="#g-lock"/></svg></span>
          <span class="cell"><svg class="ic"><use href="#g-unlock"/></svg></span>
          <span class="cell"><svg class="ic"><use href="#g-cube"/></svg></span>
          <span class="cell"><svg class="ic"><use href="#g-gem"/></svg></span>
        </div>
        <i class="grip grip-draw-r"></i>
      </div>
    </div>
  </div>

  <div class="band"></div>

  <section class="command soft">
    <div class="cmd-handle"><div class="cmd-dots"></div><div class="cmd-close">×</div></div>
    <div class="cmd-log">
      <div><span class="cmd-cjk">自动保存到</span> C:\Users\YY\appdata\local\temp\车间电气_1_1_2471.sv$ ...</div>
      <div>命令:</div>
    </div>
  </section>
  <div class="cmd-input"></div>

  <footer class="statusbar soft">
    <div class="coords">11898.3711, 6717.8</div>
    <div class="st-icons">
      <span class="st"><svg class="ic"><use href="#s-snap"/></svg></span>
      <span class="st st-on"><svg class="ic"><use href="#s-dots"/></svg></span>
      <span class="st"><svg class="ic"><use href="#s-grid"/></svg></span>
      <span class="st"><svg class="ic"><use href="#s-ortho"/></svg></span>
      <span class="st st-on"><svg class="ic"><use href="#s-polar"/></svg></span>
      <span class="st"><svg class="ic"><use href="#s-osnap"/></svg></span>
      <span class="st"><svg class="ic"><use href="#s-track"/></svg></span>
      <span class="st st-on"><svg class="ic"><use href="#s-ducs"/></svg></span>
      <span class="st st-on"><svg class="ic"><use href="#s-dyn"/></svg></span>
      <span class="st"><svg class="ic"><use href="#s-lwt"/></svg></span>
      <span class="st"><svg class="ic"><use href="#s-plus"/></svg></span>
      <span class="st st-on"><svg class="ic"><use href="#s-qp"/></svg></span>
      <span class="st"><svg class="ic"><use href="#s-list"/></svg></span>
      <span class="st"><svg class="ic"><use href="#s-green"/></svg></span>
      <span class="st"><svg class="ic"><use href="#s-cross"/></svg></span>
    </div>
    <div class="st-right">
      <span class="rc w31 rc-text">模型</span>
      <span class="rc w19"><svg class="ic ic-s"><use href="#r-layout"/></svg></span>
      <span class="rc w25"><svg class="ic ic-s"><use href="#r-two"/></svg></span>
      <i class="rc-gap w17"></i>
      <span class="rc w53"><svg class="ic ic-s"><use href="#r-anno"/></svg><span class="scale">1:1</span><i class="tri"></i></span>
      <span class="rc w22"><svg class="ic ic-s"><use href="#r-annoy"/></svg></span>
      <span class="rc w25"><i class="faint">2</i></span>
      <i class="rc-gap w3"></i>
      <span class="rc w25"><svg class="ic ic-s"><use href="#gear"/></svg></span>
      <span class="rc w20"><svg class="ic ic-s"><use href="#r-lock"/></svg></span>
      <span class="rc w22"><svg class="ic ic-s"><use href="#r-orange"/></svg></span>
      <span class="rc w21 rc-edit">编辑</span>
    </div>
  </footer>
  <div class="bottom-edge"></div>

  <div class="player soft">
    <span class="pl pl-1">签到</span>
    <span class="pl pl-2">答题卡</span>
    <span class="pl pl-3">画中画</span>
    <span class="pl pl-4">大头贴</span>
    <span class="pl pl-5">举手</span>
    <span class="pl pl-6">预览</span>
    <span class="pl pl-7">工具</span>
    <svg class="pl-more" viewBox="0 0 22 14"><path d="M3 2v10" stroke-dasharray="2 1.500"/><path class="pl-fill" d="M10 4l9 3-9 3z"/></svg>
    <svg class="pl-power" viewBox="0 0 20 20"><path d="M6 4.500a7.500 7.500 0 1 0 8 0"/><path d="M10 1.500v7"/></svg>
  </div>
</div>
</body>
</html>
```
FILE: styles.css
```css
* { box-sizing: border-box; }
html, body { margin: 0; padding: 0; }
body { width: 1728px; height: 1080px; overflow: hidden; background: #6d6a6e; font-family: "Liberation Sans", "Noto Sans CJK SC", sans-serif; }
i { display: block; font-style: normal; }
.defs { position: absolute; width: 0; height: 0; }
.app { position: relative; display: flex; flex-direction: column; width: 1728px; height: 1080px; overflow: hidden; }
/* the reference is a soft, video-compressed capture */
.soft { filter: blur(0.35px); }

/* title */
.titlebar { height: 24px; background: #fdf8f9; border-bottom: 1px solid #3a393b; flex: none; }
.title-top { height: 5px; border-bottom: 1px solid #d98a96; display: flex; }
.title-mark { width: 58px; height: 4px; margin-left: 832px; background: repeating-linear-gradient(90deg, #c8505e 0 2px, #f3c9cf 2px 4px); }
.title-text { padding-left: 584px; font-size: 12.500px; line-height: 13px; color: #2b2b2b; white-space: nowrap; }
.title-file { margin-left: 16px; }

/* menu */
.menubar { height: 21px; flex: none; display: flex; gap: 24px; padding: 0 0 2px 21px; align-items: center; background: linear-gradient(#8a888b, #807e81 50%, #5c5a5d); color: #dcdadd; font-size: 12px; white-space: nowrap; filter: blur(0.4px); }

/* file tabs */
.filetabs { height: 28px; flex: none; background: linear-gradient(#858386, #949295 60%, #8c8a8d); display: flex; align-items: flex-end; border-bottom: 1px solid #5e5c5f; }
.filetab-stub { width: 44px; height: 24px; background: #9b999c; border-top-right-radius: 8px; margin-right: 6px; }
.filetab { width: 120px; height: 24px; padding-bottom: 3px; background: #cfcdd0; border-radius: 8px 10px 0 0; display: flex; align-items: center; font-size: 12.500px; color: #2a2a2a; padding-left: 9px; }
.filetab-name { width: 96px; }
.filetab-x { color: #807e81; font-size: 14px; }
.filetab-new { width: 24px; height: 18px; margin: 0 0 3px 9px; background: #6d6b6e; border: 2px solid #7d7b7e; border-radius: 3px 6px 2px 2px; }

/* toolbars */
.toolbars { height: 58px; flex: none; padding-top: 4px; background: #6d6a6e; }
.tbrow { display: flex; height: 21px; }
.tbrow-2 { height: 22px; margin-top: 6px; }
.strip { display: flex; align-items: stretch; background: #f4f2f6; flex: none; }
.strip-std { width: 549px; padding-left: 0; margin-right: 0; overflow: hidden; }
.strip-std .cell:first-child { margin-left: -11px; }
.cell { flex: none; width: 23px; display: flex; align-items: center; justify-content: center; background: #f6f4f8; }
.cell-dot { width: 14px; }
.dot { width: 3px; height: 3px; background: #444; }
.dot-dim { background: #b5b3b6; }
.sep { flex: none; width: 5px; position: relative; background: #f6f4f8; }
.sep::after { content: ""; position: absolute; left: 2px; top: 2px; bottom: 2px; width: 1px; background: #9c9a9d; }
.sep-6 { width: 6px; }
.w3 { width: 3px; } .w6 { width: 6px; } .w8 { width: 8px; } .w9 { width: 9px; }
.w17 { width: 17px; } .w19 { width: 19px; } .w20 { width: 20px; } .w21 { width: 21px; } .w22 { width: 22px; } .w23 { width: 23px; } .w24 { width: 24px; } .w25 { width: 25px; } .w26 { width: 26px; } .w27 { width: 27px; } .w31 { width: 31px; } .w53 { width: 53px; }
.w87 { width: 87px; } .w118 { width: 118px; } .w119 { width: 119px; } .w120 { width: 120px; } .w122 { width: 122px; } .w124 { width: 124px; } .w149 { width: 149px; } .w157 { width: 157px; }
.pl8 { padding-left: 8px; } .pl17 { padding-left: 17px; } .pl18 { padding-left: 18px; } .pl19 { padding-left: 19px; }

.grip { flex: none; position: relative; background: #6d6a6e; }
.grip::after { content: ""; position: absolute; top: 3px; bottom: 3px; left: 2px; width: 4px; background: repeating-linear-gradient(#c0bec1 0 1px, #3f3e40 1px 2px); }
.grip-std { width: 9px; }
.grip-10 { width: 10px; }
.grip-9 { width: 9px; }

.combo { flex: none; display: flex; align-items: center; background: #e9e7eb; font-size: 12px; color: #2c2c2c; white-space: nowrap; overflow: hidden; padding-right: 3px; }
.chev { width: 8px; height: 7px; margin-left: auto; flex: none; fill: none; stroke: #8d8b8e; stroke-width: 1.500; }
.ic { width: 20px; height: 20px; flex: none; fill: none; stroke: #444446; stroke-width: 1; }
.ic-lg { width: 22px; height: 22px; }
.ic-s { width: 16px; height: 16px; }
.ic-t { font: bold 14px "Liberation Sans", sans-serif; text-anchor: middle; fill: #333; stroke: none; }
.ic-a { font: bold 22px "Liberation Sans", sans-serif; fill: #3a3a3a; stroke: none; }
.ic-z { font: bold 14px "Noto Sans CJK SC", sans-serif; text-anchor: middle; fill: #222; stroke: none; }

.strip-workspace { width: 133px; }
.clip-char { margin-left: -7px; color: #444; }
.strip-layer { width: 394px; }
.combo-layer { width: 297px; padding-left: 1px; gap: 0; }
.combo-layer .ic-s { margin-right: 1px; }
.swatch { flex: none; width: 10px; height: 10px; border: 1px solid #333; }
.swatch-green { background: #14d428; margin-left: 1px; }
.swatch-red { background: #dc0a14; margin-left: 6px; }
.layer-name { margin-left: 5px; font-size: 12.500px; color: #333; }
.color-name { margin-left: 4px; font-size: 12px; }
.strip-props { width: 573px; background: #f0eef2; }
.ln { flex: none; height: 1px; background: #222; }
.ln-59 { width: 59px; margin-left: 4px; }
.ln-34 { width: 34px; margin-left: 4px; }
.mono { font-family: "Liberation Mono", "Noto Sans CJK SC", monospace; font-size: 10px; margin-left: 6px; color: #2b2b2b; }
.mono-gap { margin-left: 6px; }
.combo-off { background: #c6c4c7; padding-left: 4px; }
.combo-off .mono { color: #8b898c; }

/* work */
.work { height: 861px; flex: none; display: flex; }
.leftcol { width: 28px; flex: none; padding-top: 9px; background: #7f7d80; border-right: 3px solid #5f5d60; }
.drawtools { width: 22px; height: 441px; background: #f2f0f4; display: flex; flex-direction: column; align-items: center; justify-content: space-around; padding-top: 2px; }
.drawtools .ic { width: 18px; height: 18px; }
.tool-a { font-size: 20px; font-weight: bold; line-height: 18px; color: #3d3d3f; }
.rightcol { flex: 1; min-width: 0; display: flex; flex-direction: column; }

.doctabs { height: 20px; flex: none; display: flex; background: #fbf8fb; align-items: stretch; }
.doctab { width: 65px; padding-left: 9px; font: 10px/20px "Liberation Mono", monospace; color: #222; background: #fdfcfe; border-right: 1px solid #bdbbc0; }
.doctab-on { width: 64px; margin-left: 3px; padding-left: 8px; font: 12px/20px "Noto Sans CJK SC", sans-serif; color: #3a1aa0; background: #f4e4fb; border-right: 0; border-left: 1px solid #8a888b; }

.canvas { position: relative; height: 796px; flex: none; background: #000; }
.view-label { position: absolute; left: 4px; top: 6px; color: #cfcfcf; font-size: 13px; line-height: 16px; letter-spacing: 0.9px; white-space: nowrap; }
.drawing { display: block; width: 1700px; height: 796px; }
.hatch-line { stroke: #f2f2b4; stroke-width: 1.200; fill: none; }
.hatch-fill { fill: url(#hatch); }
.ellipse { fill: none; stroke: #f2f28e; stroke-width: 1.500; }
.center { stroke: #858585; stroke-width: 1; fill: none; }
.center-h { stroke: #767660; stroke-width: 1; }
.beam { stroke: #e6e6e6; stroke-width: 1.100; fill: none; }
.dim { stroke: #e0202a; stroke-width: 1.400; fill: none; }
.dim-x { stroke: #ff2020; stroke-width: 1.800; }
.lamp { fill: #f50a0a; }
.arc { stroke: #a81a1e; stroke-width: 1.500; fill: none; }
.arc-tick { stroke: #c01a20; stroke-width: 1.500; }
.dim-text { font: 12px "Liberation Sans", sans-serif; fill: #b8242a; text-anchor: middle; }
.dim-len { font-size: 11px; }
.cursor { stroke: #f5f5f5; stroke-width: 1.200; fill: none; }
.ucs { stroke: #e8e8e8; stroke-width: 1.200; fill: none; }
.vc-ring { fill: none; stroke: #262428; stroke-width: 16px; }
.vc-dir { font: 18px "Noto Sans CJK SC", sans-serif; fill: #a8a6aa; text-anchor: middle; stroke: #000; stroke-width: 3px; paint-order: stroke; }
.vc-cube { fill: #a9a7aa; }
.vc-face { fill: #9b999c; }
.vc-glyph { stroke: #5c5a5d; stroke-width: 1.500; fill: none; }
.vc-wcs { fill: #8fb59a; }
.vc-wcs-t { font: 9px "Liberation Sans", sans-serif; fill: #6c8a74; text-anchor: middle; }

.layouttabs { height: 16px; flex: none; display: flex; align-items: center; background: #fbf8fc; border-bottom: 1px solid #dedce0; }
.nav-arrows { width: 60px; padding-left: 4px; display: flex; }
.navs { width: 52px; height: 12px; fill: none; stroke: #666; stroke-width: 1.200; }
.layout-on { width: 40px; height: 16px; margin-left: 1px; background: #000; color: #f2f2f2; font-size: 12.500px; line-height: 16px; text-align: center; border-radius: 0 0 8px 8px; }
.layout-off { margin-left: 6px; font-size: 12.500px; line-height: 16px; color: #1f1f1f; }
.layout-slash { width: 1px; height: 15px; margin-left: 7px; background: #9a989b; transform: rotate(22deg); }
.hs-grip { width: 5px; height: 14px; margin-left: 1005px; background: #bcbabe; }
.hs-left { margin-left: 9px; font: bold 11px "Liberation Sans", sans-serif; color: #333; }
.hs-thumb { width: 16px; height: 13px; margin-left: 232px; background: #c5c3c6; }

.drawbar { height: 29px; flex: none; display: flex; padding-top: 5px; background: #6d6a6e; border-top: 1px solid #858387; }
.grip-draw { width: 8px; }
.grip-draw::after { left: 2px; width: 2px; }
.strip-draw { width: 925px; background: #f7f5f9; height: 24px; margin-top: -1px; }
.grip-draw-r { width: 8px; }
.grip-draw-r::after { width: 2px; background: #7c7a7e; }

.band { height: 7px; flex: none; background: #6d6a6e; }

/* command */
.command { height: 34px; flex: none; display: flex; background: #c9c7ca; border-bottom: 1px solid #8d8b8e; position: relative; }
.command::after { content: ""; position: absolute; left: 0; right: 0; bottom: 3px; height: 1px; background: #d98a92; }
.cmd-handle { width: 21px; flex: none; display: flex; flex-direction: column; background: #7a787b; }
.cmd-dots { height: 15px; background: repeating-linear-gradient(90deg, #8d8b8e 0 2px, #6e6c6f 2px 4px); }
.cmd-close { flex: 1; color: #f3f3f3; font: bold 18px/17px "Liberation Sans", sans-serif; text-align: center; }
.cmd-log { padding: 3px 0 0 2px; font: 11.900px/14.500px "Liberation Mono", "Noto Sans CJK SC", monospace; color: #222; white-space: nowrap; }
.cmd-cjk { font-size: 12.600px; }
.cmd-input { height: 23px; flex: none; background: #faf8fb; border-bottom: 1px solid #2a292b; }

/* status */
.statusbar { height: 20px; flex: none; display: flex; align-items: stretch; background: linear-gradient(#7d7b7e, #79777a 45%, #8a888b 50%, #6e6c6f); }
.coords { width: 124px; padding: 6px 0 0 2px; font-size: 10px; line-height: 12px; color: #6f6d70; background: #8a888b; white-space: nowrap; overflow: hidden; }
.st-icons { display: flex; }
.st { width: 22px; flex: none; display: flex; align-items: flex-end; justify-content: center; background: #bcbabd; overflow: hidden; }
.st .ic { width: 18px; height: 15px; }
.st-on { background: #a6d9d8; }
.st-right { margin-left: auto; display: flex; }
.rc { flex: none; display: flex; align-items: center; justify-content: center; background: #b9b7ba; }
.rc-gap { flex: none; }
.rc-text { font-size: 12px; color: #1e1e1e; }
.rc-edit { justify-content: flex-start; padding-left: 1px; background: #a9dcd5; font-size: 12px; color: #1e1e1e; overflow: hidden; white-space: nowrap; }
.scale { margin-left: 3px; font-size: 11px; color: #333; letter-spacing: 1px; }
.tri { width: 0; height: 0; margin-left: 3px; border-left: 4px solid transparent; border-right: 4px solid transparent; border-top: 4px solid #222; }
.faint { color: #d6d4d7; font-size: 10px; }
.bottom-edge { height: 2px; flex: none; background: #0a0a0a; }

/* player overlay */
.player { position: absolute; left: 0; top: 1034px; width: 463px; height: 29px; background: #3f3e40; border-radius: 0 10px 10px 0; color: #a6a4a7; font-size: 12.500px; line-height: 29px; }
.pl { position: absolute; top: 1px; white-space: nowrap; }
.pl-1 { left: 0; } .pl-2 { left: 50px; } .pl-3 { left: 108px; } .pl-4 { left: 163px; } .pl-5 { left: 228px; } .pl-6 { left: 285px; } .pl-7 { left: 344px; }
.pl-more { position: absolute; left: 398px; top: 8px; width: 22px; height: 14px; fill: none; stroke: #8b898c; stroke-width: 1.200; }
.pl-fill { fill: #a6a4a7; stroke: none; }
.pl-power { position: absolute; left: 432px; top: 4px; width: 20px; height: 20px; fill: none; stroke: #b3b1b4; stroke-width: 2.200; }
```
